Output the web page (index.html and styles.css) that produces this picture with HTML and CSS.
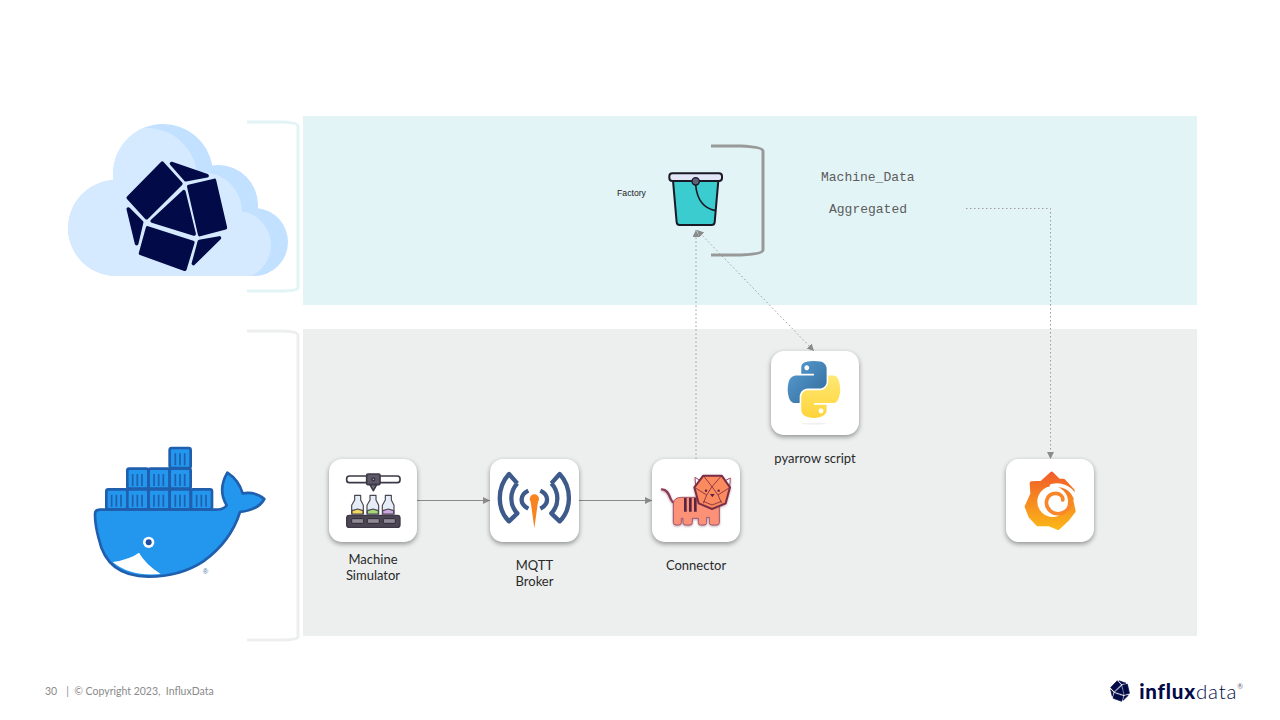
FILE: index.html
```html
<!DOCTYPE html>
<html lang="en">
<head>
  <meta charset="UTF-8" />
  <title>InfluxData pipeline</title>
  <link rel="stylesheet" href="styles.css">
</head>
<body>
  <svg class="defs" width="0" height="0">
    <defs>
      <symbol id="influx-mark" viewBox="250 176 316 342">
        <g fill="#020a47" stroke="#020a47" stroke-width="11" stroke-linejoin="round">
          <path d="M365 188 L421 250 L318 352 L263 292 Z"/>
          <path d="M393 189 L500 226 L436 238 Z"/>
          <path d="M445 258 L522 240 L555 382 L478 403 Z"/>
          <path d="M430 274 L461 401 L335 362 Z"/>
          <path d="M263 326 L303 366 L288 430 Z"/>
          <path d="M321 383 L457 427 L433 507 L300 459 Z"/>
          <path d="M477 424 L537 413 L459 490 Z"/>
        </g>
      </symbol>
      <linearGradient id="py-blue" x1="0" y1="0" x2="1" y2="1">
        <stop offset="0" stop-color="#5a9fd4"/>
        <stop offset="1" stop-color="#306998"/>
      </linearGradient>
      <linearGradient id="py-yellow" x1="0" y1="0" x2="0" y2="1">
        <stop offset="0" stop-color="#ffe873"/>
        <stop offset="1" stop-color="#ffd43b"/>
      </linearGradient>
      <linearGradient id="grafana-fill" gradientUnits="userSpaceOnUse" x1="0" y1="64" x2="0" y2="240">
        <stop offset="0" stop-color="#f15b2a"/>
        <stop offset="1" stop-color="#fbb817"/>
      </linearGradient>
      <clipPath id="cloud-clip">
        <circle cx="116" cy="228" r="48"/>
        <circle cx="163" cy="174" r="50"/>
        <circle cx="218" cy="205" r="40"/>
        <circle cx="254" cy="242" r="34"/>
        <rect x="116" y="190" width="138" height="86"/>
      </clipPath>
      <marker id="arrow" markerWidth="9" markerHeight="8" refX="7" refY="3.500" orient="auto-start-reverse" markerUnits="userSpaceOnUse">
        <path d="M0 0 L7 3.500 L0 7 Z" fill="#8b8b8b"/>
      </marker>
    </defs>
  </svg>

  <div class="slide">
    <div class="panels">
      <div class="panel panel-cloud"></div>
      <div class="panel panel-docker"></div>
    </div>

    <footer class="footer">
      <div class="copyright"><span class="page-no">30</span><span>|&nbsp; © Copyright 2023,&nbsp; InfluxData</span></div>
      <div class="brand">
        <svg class="brand-mark" width="22" height="22"><use href="#influx-mark"/></svg>
        <span class="brand-name"><b>influx</b>data</span><sup class="brand-reg">®</sup>
      </div>
    </footer>

    <!-- brackets next to the two panels -->
    <svg class="bracket bracket-cloud" width="54" height="174" viewBox="0 0 54 174">
      <path d="M0 2 H32 Q50 2 51 6 V168 Q50 171 32 171 H0"/>
    </svg>
    <svg class="bracket bracket-docker" width="54" height="314" viewBox="0 0 54 314">
      <path d="M0 2 H32 Q50 2 51 6 V308 Q50 311 32 311 H0"/>
    </svg>
    <svg class="bracket bracket-bucket" width="56" height="114" viewBox="0 0 56 114">
      <path d="M0 2 H30 Q52 3 52 7 V106 Q52 110 30 111 H0"/>
    </svg>

    <!-- connectors -->
    <svg class="wires" width="1280" height="720">
      <path class="wire" d="M417 500.500 H490" marker-end="url(#arrow)"/>
      <path class="wire" d="M579 500.500 H652" marker-end="url(#arrow)"/>
      <path class="wire dotted" d="M696 459 V230" marker-end="url(#arrow)"/>
      <path class="wire dotted" d="M697 230 L814 351" marker-start="url(#arrow)" marker-end="url(#arrow)"/>
      <path class="wire dotted" d="M966 208.500 H1050.500 V459" marker-end="url(#arrow)"/>
    </svg>

    <!-- influx cloud logo -->
    <svg class="logo-cloud" width="220" height="152" viewBox="68 124 220 152">
      <g clip-path="url(#cloud-clip)">
        <rect x="68" y="124" width="220" height="152" fill="#c2e0ff"/>
        <circle cx="116" cy="228" r="48" fill="#d6eaff"/>
        <circle cx="147" cy="178" r="50" fill="#d6eaff"/>
        <circle cx="202" cy="212" r="40" fill="#d6eaff"/>
        <circle cx="237" cy="245" r="34" fill="#d6eaff"/>
        <rect x="116" y="210" width="125" height="66" fill="#d6eaff"/>
      </g>
    </svg>
    <svg class="logo-polyhedron" width="105" height="114"><use href="#influx-mark"/></svg>

    <!-- docker whale -->
    <svg class="logo-docker" width="210" height="160" viewBox="0 0 630 480">
      <g fill="#2396ed" stroke="#1f5fae" stroke-width="8">
        <rect x="299" y="54" width="63" height="60" rx="6"/>
        <rect x="172" y="116" width="63" height="60" rx="6"/>
        <rect x="236" y="116" width="63" height="60" rx="6"/>
        <rect x="299" y="116" width="63" height="60" rx="6"/>
        <rect x="109" y="178" width="63" height="60" rx="6"/>
        <rect x="172" y="178" width="63" height="60" rx="6"/>
        <rect x="236" y="178" width="63" height="60" rx="6"/>
        <rect x="299" y="178" width="63" height="60" rx="6"/>
        <rect x="363" y="178" width="63" height="60" rx="6"/>
      </g>
      <path fill="none" stroke="#1f5fae" stroke-width="5" d="M316 70V106M330 70V106M344 70V106M188 132V168M202 132V168M216 132V168M252 132V168M266 132V168M280 132V168M316 132V168M330 132V168M344 132V168M125 194V230M139 194V230M153 194V230M188 194V230M202 194V230M216 194V230M252 194V230M266 194V230M280 194V230M316 194V230M330 194V230M344 194V230M380 194V230M394 194V230M408 194V230"/>
      <path fill="#2396ed" stroke="#1f5fae" stroke-width="8" stroke-linejoin="round" d="M75 252 Q75 239 90 239 L430 239 Q462 240 470 226 Q442 180 472 128 Q506 150 518 190 Q558 184 583 207 Q565 240 510 246 Q482 335 400 394 Q330 440 235 440 Q110 440 86 325 Q75 285 75 252 Z"/>
      <path fill="#fff" d="M128 396 Q180 388 207 368 Q226 402 272 432 Q180 440 128 396 Z"/>
      <circle cx="236" cy="337" r="17" fill="#fff"/>
      <circle cx="236" cy="337" r="9" fill="#1f4f99"/>
      <text class="whale-reg" x="406" y="432">®</text>
    </svg>

    <div class="node node-sim">
      <div class="card">
        <svg width="88" height="83" viewBox="27 27 264 249">
          <g stroke="#3d3845" stroke-width="5" stroke-linejoin="round">
            <rect x="80" y="78" width="160" height="20" rx="8" fill="#fff"/>
            <rect x="140" y="72" width="40" height="32" rx="4" fill="#5e5868"/>
            <path d="M150 104 H170 L160 122 Z" fill="#7b7585"/>
            <circle cx="160" cy="88" r="4" fill="#fff"/>
          </g>
          <g stroke="#4a4552" stroke-width="3.500" stroke-linejoin="round">
            <path d="M104 136 H122 V150 L130 166 V192 H95 V166 L104 150 Z" fill="#e6edf6"/>
            <path d="M96 182 L113 177 L129 182 V192 H96 Z" fill="#f2d95e"/>
            <path d="M150 136 H168 V150 L176 166 V192 H141 V166 L150 150 Z" fill="#e6edf6"/>
            <path d="M142 182 L159 177 L175 182 V192 H142 Z" fill="#a6d879"/>
            <path d="M196 136 H214 V150 L222 166 V192 H187 V166 L196 150 Z" fill="#e6edf6"/>
            <path d="M188 182 L205 177 L221 182 V192 H188 Z" fill="#cda8e2"/>
          </g>
          <rect x="80" y="196" width="160" height="36" rx="8" fill="#4c4654" stroke="#3d3845" stroke-width="4"/>
          <g fill="#8f8a96" stroke="#2f2b36" stroke-width="3">
            <rect x="95" y="206" width="36" height="14" rx="3"/>
            <rect x="142" y="206" width="36" height="14" rx="3"/>
            <rect x="190" y="206" width="36" height="14" rx="3"/>
          </g>
        </svg>
      </div>
      <div class="node-label">Machine<br>Simulator</div>
    </div>

    <div class="node node-mqtt">
      <div class="card">
        <svg width="89" height="83" viewBox="510 27 267 249">
          <g fill="none" stroke="#3d5a8a" stroke-width="13" stroke-linejoin="round">
            <path d="M592 100 L567 72 C530 112 530 178 567 214 L592 190 C568 165 568 126 592 100"/>
            <path d="M625 122 C598 135 598 162 625 176"/>
            <path d="M694 100 L719 72 C756 112 756 178 719 214 L694 190 C718 165 718 126 694 100"/>
            <path d="M661 122 C688 135 688 162 661 176"/>
          </g>
          <path d="M632 155 L643 235 L654 155 Z" fill="#f7841e"/>
          <circle cx="643" cy="147" r="14" fill="#f7841e"/>
        </svg>
      </div>
      <div class="node-label">MQTT<br>Broker</div>
    </div>

    <div class="node node-connector">
      <div class="card">
        <svg class="tiger" width="88" height="83" viewBox="36 357 264 249">
          <path d="M104 488 C88 490 92 448 66 448" fill="none" stroke="#8d3d55" stroke-width="7" stroke-linecap="round"/>
          <path d="M100 490 Q102 472 125 472 H238 V548 Q238 555 230 555 H215 Q208 555 208 548 V532 H200 V548 Q200 555 192 555 H182 Q175 555 175 548 V535 H157 V548 Q157 555 150 555 H136 Q129 555 129 548 V535 H124 V548 Q124 555 116 555 H108 Q100 555 100 548 Z" fill="#fb9277" stroke="#a5546a" stroke-width="3"/>
          <path d="M136 474 V515 M151 474 V515 M166 474 V515" stroke="#5a2340" stroke-width="8"/>
          <path d="M165 412 L185 425 H250 L271 414 L268 452 L240 440 H190 L168 450 Z" fill="#fff" stroke="#a04d6a" stroke-width="3"/>
          <path d="M190 407 H245 L270 442 L257 490 L216 507 L176 490 L163 442 Z" fill="#fb8a5e" stroke="#7b2d45" stroke-width="6" stroke-linejoin="round"/>
          <path d="M190 407 L216 440 L245 407 M163 442 L200 465 L216 440 L234 465 L270 442 M200 465 L190 490 M234 465 L245 490 M190 484 L216 495 L245 484" fill="none" stroke="#7b2d45" stroke-width="2.500"/>
          <path d="M210 462 H224 L217 472 Z" fill="#5a2340"/>
          <circle cx="198" cy="452" r="3.500" fill="#5a2340"/>
          <circle cx="236" cy="452" r="3.500" fill="#5a2340"/>
        </svg>
      </div>
      <div class="node-label">Connector</div>
    </div>

    <div class="node node-python">
      <div class="card card-tall">
        <svg width="88" height="84" viewBox="393 33 264 252">
          <g transform="translate(443 63) scale(1.42 1.52)">
            <path fill="url(#py-blue)" d="M54.919 0.001c-4.584.022-8.961.413-12.812 1.095C30.760 3.100 28.700 7.300 28.700 15.032V25.250h26.813v3.406H18.638c-7.793 0-14.616 4.684-16.750 13.594-2.462 10.213-2.571 16.586 0 27.250 1.906 7.938 6.457 13.594 14.250 13.594h9.219v-12.250c0-8.850 7.657-16.656 16.750-16.656h26.781c7.454 0 13.406-6.138 13.406-13.625V15.032c0-7.266-6.130-12.725-13.406-13.937C64.282.328 59.502-.020 54.918.001zM40.419 8.220c2.770 0 5.031 2.299 5.031 5.125 0 2.816-2.262 5.094-5.031 5.094-2.780 0-5.031-2.278-5.031-5.094 0-2.826 2.252-5.125 5.031-5.125z"/>
            <path fill="url(#py-yellow)" d="M85.638 28.657v11.906c0 9.231-7.826 17-16.750 17H42.106c-7.336 0-13.406 6.278-13.406 13.625v25.531c0 7.266 6.319 11.540 13.406 13.625 8.487 2.496 16.626 2.947 26.781 0 6.750-1.954 13.406-5.888 13.406-13.625V86.500H55.513v-3.405h40.188c7.793 0 10.696-5.436 13.406-13.594 2.800-8.399 2.680-16.476 0-27.250-1.926-7.757-5.604-13.594-13.406-13.594zM70.575 93.313c2.780 0 5.031 2.278 5.031 5.094 0 2.826-2.252 5.125-5.031 5.125-2.770 0-5.031-2.299-5.031-5.125 0-2.816 2.262-5.094 5.031-5.094z"/>
          </g>
          <ellipse cx="522" cy="251" rx="38" ry="3" fill="#f0f0f0"/>
        </svg>
      </div>
      <div class="node-label">pyarrow script</div>
    </div>

    <div class="node node-grafana">
      <div class="card">
        <svg width="88" height="83" viewBox="18 27 264 249">
          <path fill="url(#grafana-fill)" stroke="url(#grafana-fill)" stroke-width="12" stroke-linejoin="round" d="M155 71 L176 92 L190 92 L218 122 L214 152 L221 183 L202 208 L174 234 L145 222 L114 223 L92 200 L80 170 L97 132 L95 100 L125 98 Z"/>
          <path fill="none" stroke="#fff" stroke-width="12" stroke-linecap="round" d="M224 138 C210 110 182 102 155 108"/>
          <circle cx="158" cy="155" r="46" fill="#fff"/>
          <path fill="none" stroke="#f9862a" stroke-width="11" stroke-linecap="round" d="M212 160 C205 190 170 200 150 182 C130 162 140 130 168 130 C182 130 190 142 188 150"/>
        </svg>
      </div>
    </div>

    <!-- bucket with its labels -->
    <div class="bucket-caption">Factory</div>
    <svg class="bucket" width="56" height="54" viewBox="205 129 168 162">
      <path d="M220 155 H356 L345 280 Q344 288 336 288 H240 Q232 288 231 280 Z" fill="#3bccd0" stroke="#1a1a26" stroke-width="6" stroke-linejoin="round"/>
      <path d="M288 168 Q294 235 348 245" fill="none" stroke="#1a1a26" stroke-width="5"/>
      <rect x="209" y="133" width="158" height="23" rx="9" fill="#e2e6f7" stroke="#1a1a26" stroke-width="6"/>
      <circle cx="288" cy="157" r="11" fill="#5f6078" stroke="#1a1a26" stroke-width="4"/>
    </svg>
    <div class="table-name table-machine">Machine_Data</div>
    <div class="table-name table-aggregated">Aggregated</div>
  </div>
</body>
</html>
```

FILE: styles.css
```css
:root {
  --panel-cloud: #e2f4f6;
  --panel-docker: #edefef;
  --wire: #8b8b8b;
  --navy: #020a47;
  --label-font: Lato, "Open Sans", sans-serif;
}

body {
  margin: 0;
  background-color: #fff;
  font-family: var(--label-font);
}

.defs {
  position: absolute;
}

.slide {
  position: relative;
  width: 1280px;
  height: 720px;
  padding-top: 116px;
  box-sizing: border-box;
  overflow: hidden;
}

.panels {
  display: flex;
  flex-direction: column;
  gap: 24px;
  width: 894px;
  margin-left: 303px;
}

.panel-cloud {
  height: 189px;
  background-color: var(--panel-cloud);
}

.panel-docker {
  height: 307px;
  background-color: var(--panel-docker);
}

.footer {
  display: flex;
  justify-content: space-between;
  align-items: center;
  height: 30px;
  margin-top: 40px;
  padding: 0 37px 0 45px;
}

.copyright {
  display: flex;
  gap: 9px;
  font-size: 10.500px;
  color: #8a8a8a;
}

.brand {
  display: flex;
  align-items: center;
  color: var(--navy);
}

.brand-mark {
  margin-right: 8px;
}

.brand-name {
  font-size: 20.500px;
  font-weight: 300;
  letter-spacing: 0.8px;
}

.brand-name b {
  font-weight: 900;
}

.brand-reg {
  font-size: 7px;
  align-self: flex-start;
  margin-top: 4px;
  line-height: 1;
  color: #667;
}

/* brackets */
.bracket {
  position: absolute;
  fill: none;
}

.bracket-cloud {
  left: 247px;
  top: 120px;
  stroke: var(--panel-cloud);
  stroke-width: 3;
}

.bracket-docker {
  left: 247px;
  top: 329px;
  stroke: var(--panel-docker);
  stroke-width: 3;
}

.bracket-bucket {
  left: 711px;
  top: 144px;
  stroke: #999;
  stroke-width: 3;
}

/* connectors */
.wires {
  position: absolute;
  left: 0;
  top: 0;
}

.wire {
  fill: none;
  stroke: var(--wire);
  stroke-width: 1;
}

.dotted {
  stroke: #9c9c9c;
  stroke-dasharray: 1.500 2.500;
}

/* logos */
.logo-cloud,
.logo-polyhedron,
.logo-docker {
  position: absolute;
}

.logo-cloud {
  left: 68px;
  top: 124px;
}

.logo-polyhedron {
  left: 124px;
  top: 159px;
}

.logo-docker {
  left: 70px;
  top: 430px;
}

.whale-reg {
  font-family: "Liberation Sans", sans-serif;
  font-size: 22px;
  text-anchor: middle;
  fill: #4a78a8;
}

/* diagram nodes */
.node {
  position: absolute;
  display: flex;
  flex-direction: column;
  align-items: center;
}

.node-sim { left: 329px; top: 459px; }
.node-mqtt { left: 490px; top: 459px; }
.node-connector { left: 652px; top: 459px; }
.node-python { left: 771px; top: 351px; }
.node-grafana { left: 1006px; top: 459px; }

.card {
  display: flex;
  width: 88px;
  height: 83px;
  background-color: #fff;
  border-radius: 13px;
  box-shadow: 0 2px 5px rgba(0, 0, 0, 0.4);
}

.node-mqtt .card {
  width: 89px;
}

.card-tall {
  height: 84px;
}

.tiger {
  filter: blur(0.4px) drop-shadow(0 1px 1px rgba(90, 35, 64, 0.4));
}

.node-label {
  margin-top: 15px;
  font-size: 13px;
  line-height: 16px;
  text-align: center;
  white-space: nowrap;
  color: #2a2a2a;
}

.node-sim .node-label {
  margin-top: 9px;
}

/* bucket */
.bucket {
  position: absolute;
  left: 668px;
  top: 172px;
}

.bucket-caption {
  position: absolute;
  left: 617px;
  top: 188px;
  font-family: "Liberation Sans", sans-serif;
  font-size: 8.700px;
  line-height: 11px;
  color: #222;
}

.table-name {
  position: absolute;
  font-family: "Liberation Mono", monospace;
  font-size: 13px;
  line-height: 16px;
  white-space: nowrap;
  color: #5c5c5c;
}

.table-machine {
  left: 821px;
  top: 170px;
}

.table-aggregated {
  left: 829px;
  top: 202px;
}
```
